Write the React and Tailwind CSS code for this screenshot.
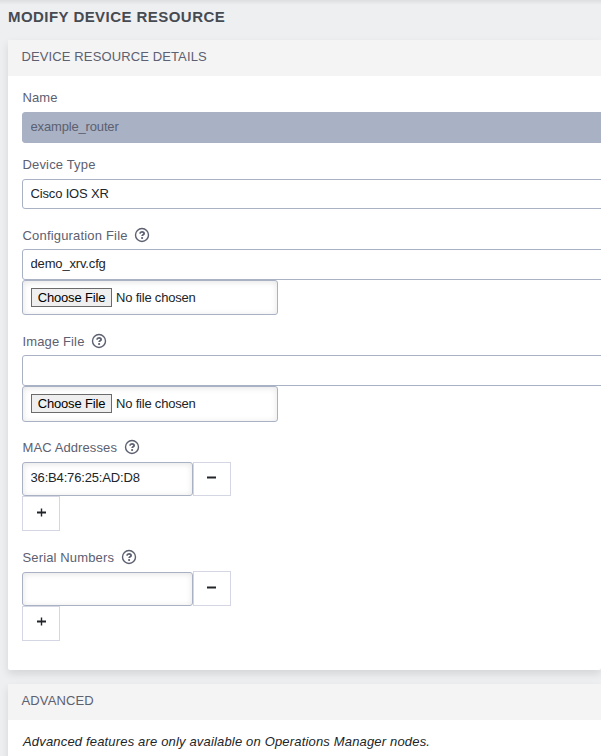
import clsx from "clsx";

function HelpIcon() {
  return (
    <svg
      viewBox="0 0 16 16"
      className="mb-px ml-[6.5px] h-4 w-4 shrink-0 text-[#5c6070]"
      fill="none"
      stroke="currentColor"
    >
      <circle cx="8" cy="8" r="6.5" strokeWidth="1.4" />
      <path
        d="M5.9 6.6c.2-1.2 1-1.8 2.1-1.8 1.2 0 2.1.6 2.1 1.7 0 1.4-1.9 1.3-1.9 2.5"
        strokeWidth="1.8"
      />
      <circle cx="8.1" cy="11" r="1.1" fill="currentColor" stroke="none" />
    </svg>
  );
}

function Label({ children, className, textClass, help }) {
  return (
    <div
      className={clsx(
        "flex h-5 items-center pl-[0.5px] text-[#5c6070]",
        className,
      )}
    >
      <span className={clsx("whitespace-nowrap pt-px", textClass)}>
        {children}
      </span>
      {help && <HelpIcon />}
    </div>
  );
}

function TextBox({ value, className, disabled }) {
  return (
    <input
      type="text"
      defaultValue={value}
      disabled={disabled}
      className={clsx(
        "block rounded-[3px] border border-[#a9b1c5] pr-2 pl-[7.5px] tracking-[-0.16px] outline-none",
        disabled ? "bg-[#a9b1c5] text-[#5c6070]" : "bg-white text-[#212529]",
        className,
      )}
    />
  );
}

function FilePicker({ className }) {
  return (
    <div
      className={clsx(
        "flex w-64 items-center rounded-[3px] border border-[#a9b1c5] bg-white pl-2 shadow-[inset_0_1px_6px_rgba(0,0,0,0.11)]",
        className,
      )}
    >
      <button className="h-[19px] w-[81px] border border-[#6b6b6b] bg-[#efefef] text-[13px] leading-[17px] tracking-[-0.15px] whitespace-nowrap text-black">
        Choose File
      </button>
      <span className="ml-1 tracking-[-0.2px] text-[#212529]">
        No file chosen
      </span>
    </div>
  );
}

function SquareButton({ plus, className }) {
  return (
    <button
      className={clsx(
        "flex w-[38px] items-center justify-center border border-[#d5d6e4] bg-white text-[#212529]",
        plus ? "pl-px" : "pr-px",
        className,
      )}
    >
      <svg
        viewBox="0 0 9 9"
        className="h-[9px] w-[9px]"
        stroke="currentColor"
        fill="none"
      >
        <path d="M0 4.5h9" strokeWidth="2" />
        {plus && <path d="M4.5 .5v8" strokeWidth="1.4" />}
      </svg>
    </button>
  );
}

function ListField({ value, minusClass, plusClass }) {
  return (
    <div>
      <div className="flex h-[34px] items-end">
        <TextBox
          value={value}
          className="h-[34px] w-[171px] pb-1 shadow-[inset_0_1px_6px_rgba(0,0,0,0.11)]"
        />
        <SquareButton className={minusClass} />
      </div>
      <SquareButton plus className={plusClass} />
    </div>
  );
}

function Card({ title, className, children }) {
  return (
    <section
      className={clsx(
        "ml-2 rounded-[2px] bg-white shadow-[0_4px_8px_rgba(0,0,0,0.11)]",
        className,
      )}
    >
      <h2 className="flex h-9 items-center bg-[#f4f4f4] pr-3 pb-[3px] pl-[13.5px] tracking-[0.12px] text-[#5c6070]">
        {title}
      </h2>
      <div className="pl-3.5">{children}</div>
    </section>
  );
}

export default function App() {
  return (
    <div className="h-[756px] w-[601px] overflow-hidden bg-[#eeeff1] font-['Liberation_Sans',Arial,sans-serif] text-[13px] leading-5">
      <h1 className="h-10 bg-linear-to-b from-[#dddee0] to-[#eeeff1] to-[5px] pt-[7px] pl-2 text-[15px] font-bold tracking-[0.45px] text-[#464b52]">
        MODIFY DEVICE RESOURCE
      </h1>

      <Card title="DEVICE RESOURCE DETAILS" className="h-[630px]">
        <Label className="mt-[11px]" textClass="tracking-[0.1px]">
          Name
        </Label>
        <TextBox
          value="example_router"
          disabled
          className="mt-[5px] h-[31px] w-[620px] pb-0.5"
        />
        <Label className="mt-[11px]" textClass="tracking-[0.16px]">
          Device Type
        </Label>
        <TextBox
          value="Cisco IOS XR"
          className="mt-[5px] h-[30px] w-[620px] pb-0.5"
        />
        <Label className="mt-4" textClass="tracking-[0.18px]" help>
          Configuration File
        </Label>
        <TextBox
          value="demo_xrv.cfg"
          className="mt-1 h-[31px] w-[620px] pb-0.5"
        />
        <FilePicker className="h-[35px]" />
        <Label className="mt-4" textClass="tracking-[0.13px]" help>
          Image File
        </Label>
        <TextBox value="" className="mt-1 h-[31px] w-[620px] pb-0.5" />
        <FilePicker className="h-9 pb-px" />
        <Label className="mt-[15px]" textClass="tracking-[0.1px]" help>
          MAC Addresses
        </Label>
        <div className="mt-[5px]">
          <ListField
            value="36:B4:76:25:AD:D8"
            minusClass="h-[34px] pb-[3px]"
            plusClass="h-[35px] pb-0.5"
          />
        </div>
        <Label className="mt-4" textClass="tracking-[0.14px]" help>
          Serial Numbers
        </Label>
        <div className="mt-[5px]">
          <ListField
            value=""
            minusClass="h-[35px] pb-0.5"
            plusClass="h-[35px] pb-1"
          />
        </div>
      </Card>

      <Card title="ADVANCED" className="mt-3.5 h-[120px]">
        <p className="pt-3 pl-px tracking-[0.17px] text-[#212529] italic">
          Advanced features are only available on Operations Manager nodes.
        </p>
      </Card>
    </div>
  );
}
